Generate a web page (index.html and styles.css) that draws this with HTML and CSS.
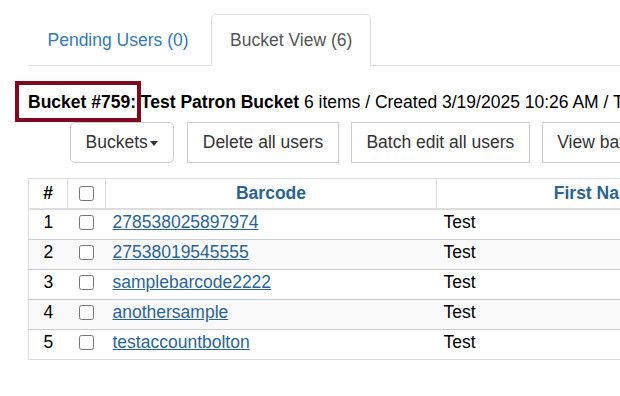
FILE: index.html
```html
<!DOCTYPE html>
<html>
  <head>
    <title>Patron Bucket</title>
    <meta name="viewport" content="width=device-width, initial-scale=1.0" />
    <link rel="stylesheet" href="styles.css">
  </head>

  <body>
    <div class="page">
      <!-- TABS -->
      <ul class="tabs">
        <li><a href="#pending">Pending Users (0)</a></li>
        <li class="active"><a href="#bucket">Bucket View (6)</a></li>
      </ul>

      <!-- BUCKET INFO -->
      <div class="bucket-info">
        <b>Bucket #759:</b> <b>Test Patron Bucket</b> 6 items / Created 3/19/2025 10:26 AM / Type: Patron
        <span class="highlight"></span>
      </div>

      <div class="toolbar">
        <button class="btn btn-rounded">Buckets<span class="caret"></span></button>
        <button class="btn">Delete all users</button>
        <button class="btn">Batch edit all users</button>
        <button class="btn">View batch edits</button>
      </div>

      <table class="users">
        <thead>
          <tr>
            <th class="col-num">#</th>
            <th class="col-check"><input type="checkbox" /></th>
            <th class="col-barcode">Barcode</th>
            <th class="col-name">First Name</th>
            <th class="col-name">Last Name</th>
          </tr>
        </thead>
        <tbody>
          <tr>
            <td class="col-num">1</td>
            <td class="col-check"><input type="checkbox" /></td>
            <td><a href="#">278538025897974</a></td>
            <td>Test</td>
            <td>Patron</td>
          </tr>
          <tr>
            <td class="col-num">2</td>
            <td class="col-check"><input type="checkbox" /></td>
            <td><a href="#">27538019545555</a></td>
            <td>Test</td>
            <td>Patron</td>
          </tr>
          <tr>
            <td class="col-num">3</td>
            <td class="col-check"><input type="checkbox" /></td>
            <td><a href="#">samplebarcode2222</a></td>
            <td>Test</td>
            <td>Patron</td>
          </tr>
          <tr>
            <td class="col-num">4</td>
            <td class="col-check"><input type="checkbox" /></td>
            <td><a href="#">anothersample</a></td>
            <td>Test</td>
            <td>Patron</td>
          </tr>
          <tr>
            <td class="col-num">5</td>
            <td class="col-check"><input type="checkbox" /></td>
            <td><a href="#">testaccountbolton</a></td>
            <td>Test</td>
            <td>Patron</td>
          </tr>
        </tbody>
      </table>
    </div>
  </body>
</html>
```

FILE: styles.css
```css
html,
body {
  overflow: hidden;
}
body {
  margin: 0;
  font-family: 'Liberation Sans', Arial, sans-serif;
  font-size: 17.5px;
  line-height: 25px;
  color: #000;
  background: #fff;
}
.page {
  position: relative;
  width: 1100px;
  padding: 14px 0 0 28px;
}
a {
  color: #2a6496;
}

/* tabs */
.tabs {
  display: flex;
  margin: 0;
  padding: 0;
  list-style: none;
  border-bottom: 1px solid #ddd;
}
.tabs li {
  margin-right: 3px;
  margin-bottom: -1px;
}
.tabs a {
  display: block;
  padding: 12.5px 18.5px;
  border: 1px solid transparent;
  border-radius: 5px 5px 0 0;
  color: #337ab7;
  text-decoration: none;
}
.tabs .active a {
  padding: 12.5px 18px;
  color: #555;
  background: #fff;
  border-color: #ddd;
  border-bottom-color: transparent;
}

/* bucket info */
.bucket-info {
  position: relative;
  margin: 24px 0 0 0;
  white-space: nowrap;
}
.highlight {
  position: absolute;
  left: -13px;
  top: -9px;
  width: 118px;
  height: 33px;
  border: 4px solid #7d0a1f;
}

/* toolbar */
.toolbar {
  display: flex;
  gap: 12px;
  margin: 7px 0 0 42px;
}
.btn {
  flex: none;
  font-family: inherit;
  font-size: 17.5px;
  line-height: 25px;
  padding: 7px 14.5px;
  color: #333;
  background: #fff;
  border: 1px solid #ccc;
  border-radius: 0;
  white-space: nowrap;
}
.btn-rounded {
  border-radius: 5px;
  margin-right: 1px;
}
.caret {
  display: inline-block;
  width: 0;
  height: 0;
  margin-left: 2px;
  margin-right: 1px;
  vertical-align: middle;
  border-top: 5px solid #333;
  border-left: 4.5px solid transparent;
  border-right: 4.5px solid transparent;
}

/* table */
.users {
  margin-top: 15px;
  border-collapse: collapse;
  border: 1px solid #ddd;
}
.users th,
.users td {
  padding: 0 7px 4px;
  border-top: 1.5px solid #ccc;
  text-align: left;
  font-weight: normal;
  white-space: nowrap;
}
.users th {
  padding: 2px 7px;
  color: #2a6496;
  font-weight: bold;
  text-align: center;
  border-top: none;
  border-bottom: 2.5px solid #ddd;
  border-left: 1px solid #ddd;
}
.users tbody tr:nth-child(even) {
  background: #f9f9f9;
}
.users .col-num {
  width: 24px;
  text-align: center;
  color: #000;
}
.users .col-check {
  width: 23px;
  text-align: center;
}
.users .col-barcode {
  width: 316px;
}
.users .col-name {
  width: 310px;
}
.users input {
  width: 15px;
  height: 15px;
  margin: 0;
  vertical-align: -2px;
}
```
